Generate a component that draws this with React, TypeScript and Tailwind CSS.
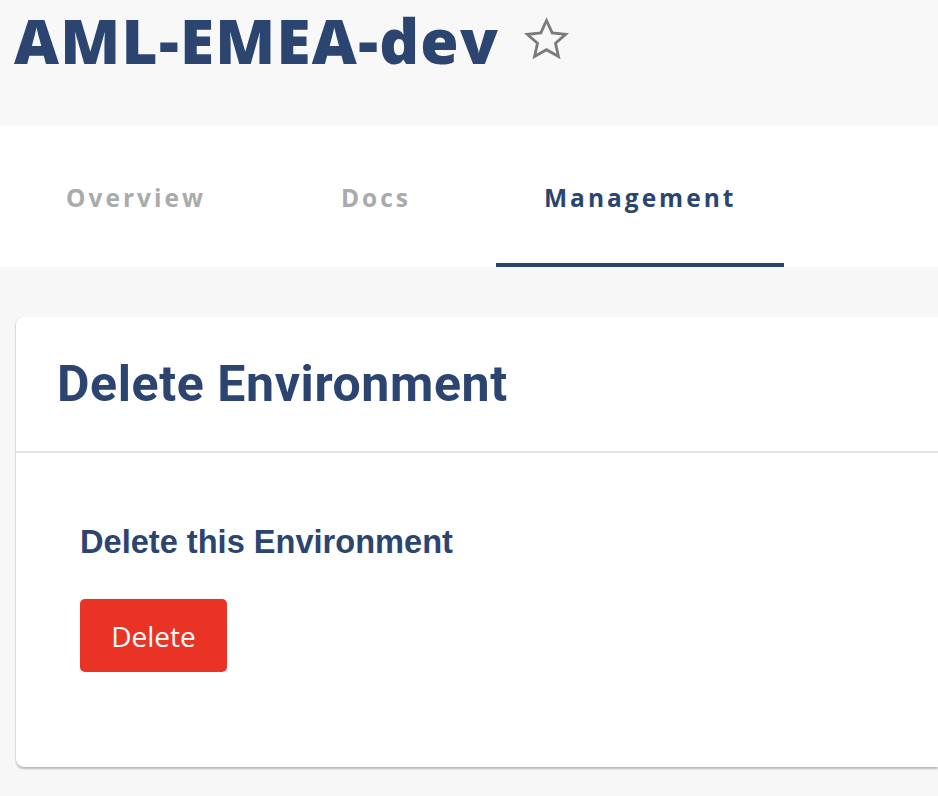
import { useState } from "react";

const tabs = ["Overview", "Docs", "Management"];

function StarIcon() {
  return (
    <svg width="47" height="45" viewBox="0 0 24 23" fill="none" className="text-[#7b7b7b]">
      <path
        d="M12 1.8l2.9 6.3 6.9.7-5.2 4.6 1.5 6.8L12 16.7l-6.1 3.5 1.5-6.8-5.2-4.6 6.9-.7L12 1.8z"
        stroke="currentColor"
        strokeWidth="1.45"
        strokeLinejoin="miter"
      />
    </svg>
  );
}

export default function App() {
  const [active, setActive] = useState("Management");

  return (
    <div className="min-h-[796px] bg-[#f7f7f7]" style={{ fontFamily: "'Open Sans', 'Noto Sans', sans-serif" }}>
      {/* page header */}
      <header className="h-[126px] bg-[#f8f8f8] pl-[14px] pt-[6px] flex items-start gap-[24px]">
        <h1 className="text-[62px] font-extrabold leading-[68px] text-[#2b4570] tracking-[1.3px]">AML-EMEA-dev</h1>
        <div className="mt-[11px]">
          <StarIcon />
        </div>
      </header>

      {/* tabs */}
      <nav className="h-[141px] bg-white flex pl-[16px]">
        {tabs.map((t) => {
          const on = t === active;
          return (
            <button
              key={t}
              onClick={() => setActive(t)}
              className={
                "min-w-[240px] px-[48px] h-full flex items-center justify-center text-[24.5px] font-bold tracking-[3px] border-b-4 pt-[7px] " +
                (on ? "text-[#2b4570] border-[#2b4570]" : "text-[#aaaaaa] border-transparent")
              }
            >
              {t}
            </button>
          );
        })}
      </nav>

      {/* card */}
      <div className="pt-[50px] pl-[16px]">
        <section className="bg-white rounded-l-[8px] shadow-[0_2px_2px_rgba(0,0,0,0.25),-1px_0_1px_rgba(0,0,0,0.06)] h-[450px]">
          <div className="h-[136px] border-b-2 border-[#e3e3e3] pl-[41px] flex items-center">
            <h2
              className="text-[50px] font-bold text-[#2b4570] tracking-[0.6px]"
              style={{ fontFamily: "Roboto, sans-serif" }}
            >
              Delete Environment
            </h2>
          </div>
          <div className="pl-[64px] pt-[69px]">
            <h3
              className="text-[32.6px] font-bold text-[#2b4570] leading-[40px]"
              style={{ fontFamily: "'Liberation Sans', Arial, sans-serif" }}
            >
              Delete this Environment
            </h3>
            <button className="mt-[37px] w-[147px] h-[73px] rounded-[5px] bg-[#e93325] text-white text-[28px] flex items-center justify-center">
              Delete
            </button>
          </div>
        </section>
      </div>
    </div>
  );
}
